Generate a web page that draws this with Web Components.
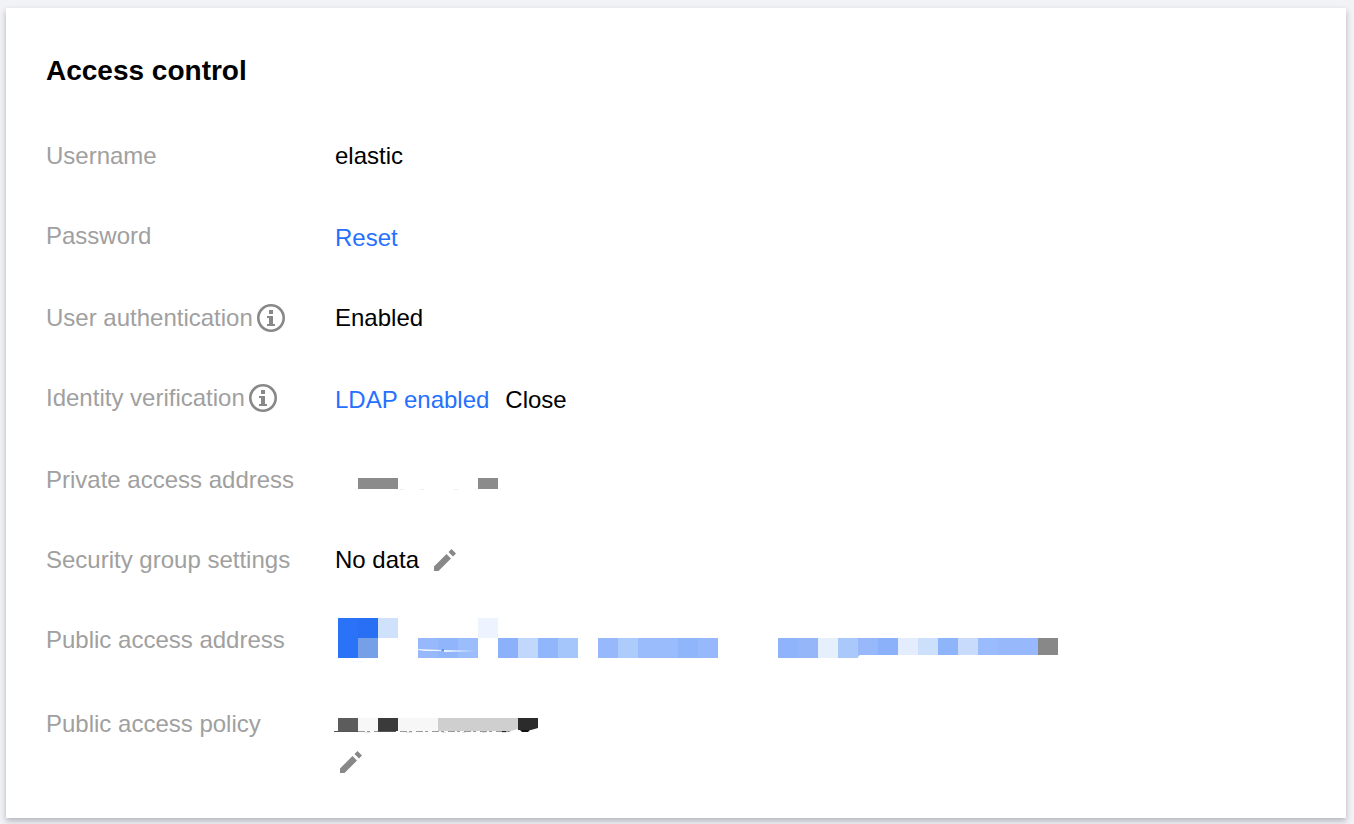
<!DOCTYPE html>
<html lang="en">
<head>
<meta charset="utf-8">
<title>Access control</title>
<style>
  body { margin: 0; padding: 8px 8px 6px 6px; background: #f2f3f6; font: 24px/40px "Liberation Sans", Arial, sans-serif; color: #000; }
</style>
</head>
<body>
<info-card>
  <span slot="title">Access control</span>
  <info-row label="Username">elastic</info-row>
  <info-row label="Password"><action-link>Reset</action-link></info-row>
  <info-row label="User authentication" hint>Enabled</info-row>
  <info-row label="Identity verification" hint><action-link>LDAP enabled</action-link><action-link plain>Close</action-link></info-row>
  <info-row label="Private access address"><masked-value kind="private"></masked-value></info-row>
  <info-row label="Security group settings">No data<edit-button label="Edit security group settings"></edit-button></info-row>
  <info-row label="Public access address"><masked-value kind="public"></masked-value></info-row>
  <info-row label="Public access policy" stacked><masked-value kind="policy"></masked-value><edit-button label="Edit public access policy"></edit-button></info-row>
</info-card>

<script>
class InfoCard extends HTMLElement {
  constructor() {
    super();
    this.attachShadow({ mode: 'open' }).innerHTML = `
      <style>
        :host { display: block; background: #fff; padding: 43px 40px 36px; box-shadow: 0 3px 6px rgba(54, 58, 80, .34); }
        h1 { margin: 0 0 45px; font-size: 28px; line-height: 40px; font-weight: 700; }
        .rows { display: grid; gap: 40px; }
      </style>
      <h1><slot name="title"></slot></h1>
      <div class="rows"><slot></slot></div>`;
  }
}

class InfoRow extends HTMLElement {
  constructor() {
    super();
    this.attachShadow({ mode: 'open' }).innerHTML = `
      <style>
        :host { --edit-gap: 14px; display: grid; grid-template-columns: 289px 1fr; align-items: start; }
        :host([stacked]) { --edit-gap: 4px; }
        .label { display: flex; align-items: center; height: 40px; color: #a0a0a0; white-space: nowrap; }
        .value { display: flex; align-items: start; min-height: 40px; }
        :host([stacked]) .value { flex-direction: column; }
        svg { display: block; width: 30px; height: 30px; margin-left: 3px; flex: none; }
      </style>
      <div class="label"><span id="name"></span></div>
      <div class="value" role="group" aria-labelledby="name"><slot></slot></div>`;
  }
  connectedCallback() {
    this.shadowRoot.getElementById('name').textContent = this.getAttribute('label');
    if (this.hasAttribute('hint')) {
      this.shadowRoot.querySelector('.label').insertAdjacentHTML('beforeend', `
        <svg viewBox="0 0 30 30" aria-hidden="true">
          <circle cx="15" cy="15" r="12.7" fill="none" stroke="#888" stroke-width="2.6"/>
          <path d="M13 7h4v4h-4zM11 13h6v8h2v2h-8v-2h2v-6h-2z" fill="#888"/>
        </svg>`);
    }
  }
}

class ActionLink extends HTMLElement {
  constructor() {
    super();
    this.attachShadow({ mode: 'open' }).innerHTML = `
      <style>
        :host { display: block; padding-top: 2px; margin-right: 16px; }
        a { color: #2670ff; text-decoration: none; }
        :host([plain]) a { color: #000; }
      </style>
      <a href="#"><slot></slot></a>`;
  }
}

class EditButton extends HTMLElement {
  constructor() {
    super();
    this.attachShadow({ mode: 'open' }).innerHTML = `
      <style>
        :host { display: block; margin-left: var(--edit-gap); }
        button { display: flex; align-items: center; height: 40px; border: 0; padding: 0; background: none; cursor: pointer; }
        svg { display: block; width: 24px; height: 24px; }
      </style>
      <button type="button">
        <svg viewBox="0 0 24 24" aria-hidden="true" fill="#888"><path d="M1 18.5 13.5 6l4.5 4.5L5.5 23H1zM15.500 4l3-3L23 5.500l-3 3z"/></svg>
      </button>`;
  }
  connectedCallback() {
    this.shadowRoot.querySelector('button').setAttribute('aria-label', this.getAttribute('label'));
  }
}

/* Pixelated values. Each block is [x, y, width, height, colour]. */
const MASKS = {
  private: { height: 40, blocks: [[24,18,40,11,'#8b8b8b'],[144,18,20,11,'#8b8b8b'],[66,29,4,1,'#f0f0f0'],[86,29,4,1,'#f0f0f0'],[120,29,4,1,'#f0f0f0']] },
  public: { height: 44, blocks: [
    [4,-2,20,40,'#2a73f9'],[24,-2,20,20,'#286ff3'],[24,18,20,20,'#759fe6'],[44,-2,20,20,'#d0e1fc'],
    [84,18,20,20,'#97b8fb'],[104,18,20,20,'#90b5fa'],[124,18,20,20,'#9cbdfb'],[144,-2,20,20,'#eef4ff'],
    [164,18,20,20,'#8ab1f9'],[184,18,20,20,'#c1d8fc'],[204,18,20,20,'#92b6fb'],[224,18,20,20,'#a5c6fb'],
    [264,18,20,20,'#97b8fa'],[284,18,20,20,'#adcbfb'],[304,18,40,20,'#9abcfd'],[344,18,20,20,'#8fb5fb'],[364,18,20,20,'#97b8fa'],
    [444,18,20,20,'#8fb4fc'],[464,18,20,20,'#96b6fa'],[484,18,20,20,'#e6f0fd'],[504,18,20,20,'#aac9fa'],
    [524,18,20,17,'#97b8fa'],[544,18,20,17,'#8ab1fa'],[564,18,20,17,'#e4edfd'],[584,18,20,17,'#cde0fb'],[604,18,20,17,'#8eb4fa'],
    [624,18,20,17,'#c8dbfc'],[644,18,20,17,'#9abcfd'],[664,18,40,17,'#97b8fa'],[704,18,20,17,'#888'],[17,41,13,1,'#f2f6ff']],
    extra: '<path d="M84 29l23 1v1H91l-7-1zM110 30l31 1-31 1z" fill="#edf4ff"/><path d="M108 29h2v2h-2z" fill="#5b91f5"/><path d="M524 35h2l-2 2z" fill="#aac9fa"/>' },
  policy: { height: 38, blocks: [[4,14,20,13,'#5c5c5c'],[24,14,20,13,'#f7f7f7'],[44,14,20,13,'#3a3a3a'],[64,14,40,13,'#f7f7f7'],[104,14,80,13,'#cfcfcf']],
    extra: '<path d="M184 14h20v10l-7 2h-13z" fill="#2b2b2b"/><path d="M0 27.5h24M44 27.5h18" stroke="#555"/><path d="M24 27.5h20M66 27.5h110" stroke="#999" stroke-dasharray="7 2 3 4"/><path d="M168 27.5h4M174 27.5h3" stroke="#222"/><path d="M186 26h10l-2 2h-6z" fill="#111"/><path d="M31 28.5h6M72 28.5h6M108 28.5h4M128 28.5h4M148 28.5h4M168 28.5h4" stroke="#e2e2e2"/><path d="M173 28l11-3v3z" fill="#fff"/>' }
};

class MaskedValue extends HTMLElement {
  constructor() {
    super();
    this.attachShadow({ mode: 'open' });
  }
  connectedCallback() {
    const { height, blocks, extra = '' } = MASKS[this.getAttribute('kind')];
    const rects = blocks.map(([x, y, w, h, c]) => `<rect x="${x}" y="${y}" width="${w}" height="${h}" fill="${c}"/>`).join('');
    this.shadowRoot.innerHTML = `
      <style>
        :host { display: block; }
        svg { display: block; overflow: visible; }
      </style>
      <svg width="740" height="${height}" viewBox="1 0 740 ${height}" role="img" aria-label="Hidden value">${rects}${extra}</svg>`;
  }
}

customElements.define('info-card', InfoCard);
customElements.define('info-row', InfoRow);
customElements.define('action-link', ActionLink);
customElements.define('edit-button', EditButton);
customElements.define('masked-value', MaskedValue);
</script>
</body>
</html>
